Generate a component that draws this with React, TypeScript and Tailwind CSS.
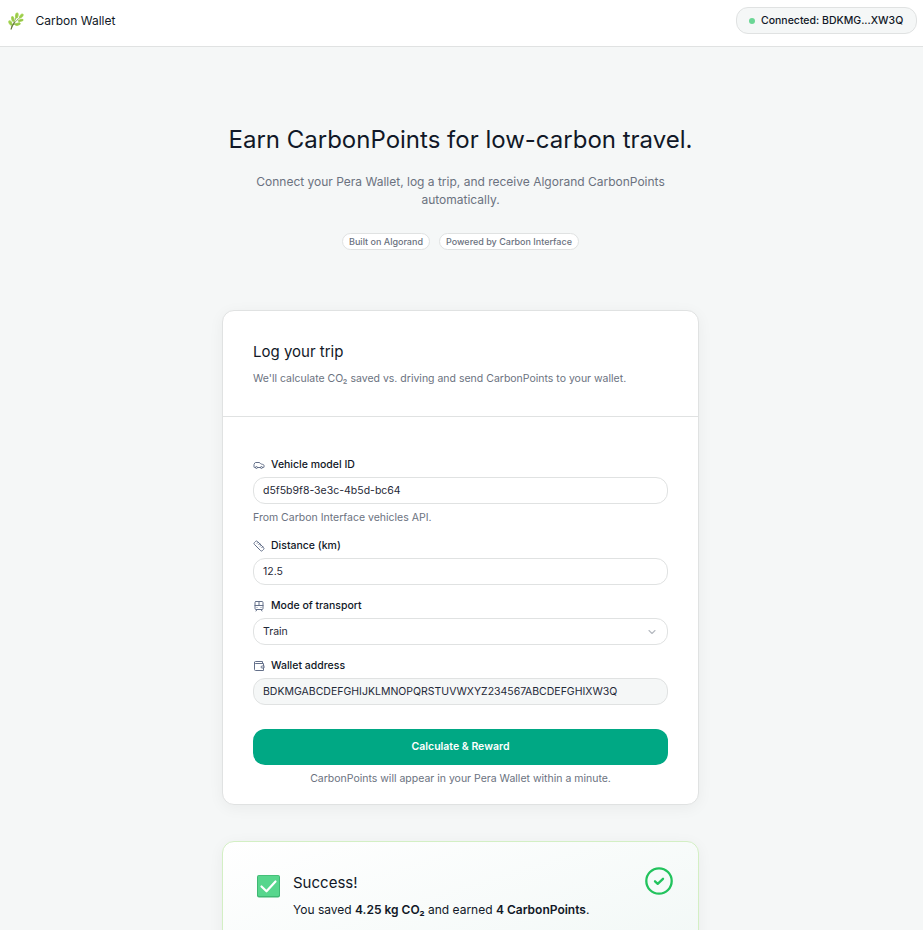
import type { ReactNode } from 'react';
import { Car, Ruler, TramFront } from 'lucide-react';

function LeafLogo() {
  return (
    <svg className="h-[18px] w-4" viewBox="0 0 16 18" fill="none">
      <path d="M3.200 17C4.200 13 7 9.500 12.200 5.400M4 12.600 3 9.800M6 10.200 8.600 4.500M5.300 12.600 11.500 11" stroke="#7f9f4a" strokeWidth="0.9" strokeLinecap="round" />
      <g fill="#a9d857">
        <ellipse cx="8.800" cy="3.400" rx="1.800" ry="3" transform="rotate(8 8.800 3.400)" />
        <ellipse cx="13.300" cy="4" rx="1.600" ry="2.800" transform="rotate(42 13.300 4)" />
        <ellipse cx="4.800" cy="6.900" rx="1.700" ry="3" transform="rotate(-14 4.800 6.900)" />
        <ellipse cx="12.800" cy="8.400" rx="1.500" ry="2.800" transform="rotate(78 12.800 8.400)" />
        <ellipse cx="2.400" cy="11" rx="1.700" ry="2.800" transform="rotate(-30 2.400 11)" />
        <ellipse cx="9.700" cy="12.200" rx="1.600" ry="3" transform="rotate(78 9.700 12.200)" />
      </g>
      <g stroke="#86b544" strokeWidth="0.7" strokeLinecap="round">
        <path d="M8.500 5.500 9 2M12.300 5.300 14.500 3M5.300 9 4.600 5.500M3.600 12.800 1.800 10M7.500 12.600 12 11.800M10.500 9 14.500 8" />
      </g>
      <path d="M3.200 17C3.500 14.800 4.700 12.700 6.400 10.700" stroke="#66783f" strokeWidth="1.100" strokeLinecap="round" />
    </svg>
  );
}

const iconClass = 'size-3 shrink-0 text-[#64708a]';

function WalletIcon() {
  return (
    <svg className={iconClass} viewBox="0 0 24 24" fill="none" stroke="currentColor" strokeWidth="2" strokeLinecap="round" strokeLinejoin="round">
      <path d="M21 12V7H5a2 2 0 0 1 0-4h14v4" />
      <path d="M3 5v14a2 2 0 0 0 2 2h16v-5" />
      <path d="M18 12a2 2 0 0 0 0 4h4v-4Z" />
    </svg>
  );
}

function Label({ icon, children }: { icon: ReactNode; children: ReactNode }) {
  return (
    <div className="flex h-4 items-center gap-1.5 text-[10.5px] font-medium leading-4 text-[#111827]">
      {icon}
      {children}
    </div>
  );
}

function Field({ className = 'bg-white', children }: { className?: string; children: ReactNode }) {
  return (
    <div className={`mt-1 flex h-[27px] items-center justify-between rounded-[12px] border border-[#e0e2e2] px-[9px] text-[10.5px] text-[#1f2937] ${className}`}>
      {children}
    </div>
  );
}

export default function App() {
  return (
    <div className="flex h-[930px] w-full flex-col overflow-hidden bg-[#f5f7f7] font-['Inter',sans-serif] text-[#111827]">
      <header className="flex h-[47px] shrink-0 items-start justify-between border-b border-[#e0e2e2] bg-white pl-2 pr-1.5 pt-[7px]">
        <div className="flex h-[27px] items-center gap-[11.500px] text-[12px]">
          <LeafLogo />
          <span>Carbon Wallet</span>
        </div>
        <div className="flex h-[27px] w-[181px] items-center gap-1.5 whitespace-nowrap rounded-[12px] border border-[#e0e2e2] bg-[#f5f7f7] pl-3 text-[10.5px] font-medium">
          <span className="size-1.5 rounded-full bg-[#6bd695]" />
          Connected: BDKMG...XW3Q
        </div>
      </header>

      <main className="ml-[222px] flex w-[477px] shrink-0 flex-col">
        <section className="flex flex-col items-center pt-[78px] text-center">
          <h1 className="whitespace-nowrap text-[24px] leading-[30px]">Earn CarbonPoints for low-carbon travel.</h1>
          <p className="mt-[18px] w-[432px] text-[12px] leading-[18px] text-[#6b7280]">
            Connect your Pera Wallet, log a trip, and receive Algorand CarbonPoints automatically.
          </p>
          <div className="mt-6 flex gap-[9px] text-[9px] font-medium leading-[15px] text-[#6b7280]">
            <span className="w-[88px] rounded-full border border-[#e0e2e2] bg-white">Built on Algorand</span>
            <span className="w-[140px] rounded-full border border-[#e0e2e2] bg-white">Powered by Carbon Interface</span>
          </div>
        </section>

        <section className="mt-[60px] h-[495px] rounded-[12px] border border-[#e0e2e2] bg-white shadow-[0_3px_15px_rgba(0,0,0,0.05)]">
          <div className="h-[106px] border-b border-[#e0e2e2] px-[30px] pt-[31px]">
            <h2 className="text-[15px] leading-5">Log your trip</h2>
            <p className="mt-[9px] text-[10.5px] leading-4 text-[#6b7280]">
              We'll calculate CO₂ saved vs. driving and send CarbonPoints to your wallet.
            </p>
          </div>
          <div className="px-[30px] pt-10">
            <Label icon={<Car className={iconClass} />}>Vehicle model ID</Label>
            <Field>d5f5b9f8-3e3c-4b5d-bc64</Field>
            <p className="mb-3 mt-1.5 text-[10.5px] leading-4 text-[#6b7280]">From Carbon Interface vehicles API.</p>
            <Label icon={<Ruler className={iconClass} />}>Distance (km)</Label>
            <Field>12.5</Field>
            <div className="h-[13px]" />
            <Label icon={<TramFront className={iconClass} />}>Mode of transport</Label>
            <Field>
              Train
              <svg className="size-3" viewBox="0 0 12 12" fill="none" stroke="#b5b9c0" strokeWidth="1.1" strokeLinecap="round" strokeLinejoin="round">
                <path d="m3 4.500 3 3 3-3" />
              </svg>
            </Field>
            <div className="h-[13px]" />
            <Label icon={<WalletIcon />}>Wallet address</Label>
            <Field className="bg-[#f5f7f7]">BDKMGABCDEFGHIJKLMNOPQRSTUVWXYZ234567ABCDEFGHIXW3Q</Field>
            <button className="mt-6 block h-9 w-full rounded-[12px] bg-[#00a884] text-[10.5px] font-semibold text-white">Calculate &amp; Reward</button>
            <p className="mt-1.5 text-center text-[10.5px] leading-4 text-[#6b7280]">
              CarbonPoints will appear in your Pera Wallet within a minute.
            </p>
          </div>
        </section>

        <section className="mt-9 flex h-[150px] items-start rounded-[12px] border border-[#d3efc4] bg-linear-to-br from-white to-[#f0f7f5] pl-[34px] pr-[25px] shadow-[0_3px_15px_rgba(0,0,0,0.05)]">
          <svg className="mt-[33px] h-[23px] w-[23px]" viewBox="0 0 23 23">
            <rect width="23" height="22.500" rx="2" fill="#3fb873" />
            <rect x="1" y="0.700" width="21" height="20.300" rx="1" fill="#57d68d" />
            <path d="m4.500 11.500 5 4.800 9-9.800" fill="none" stroke="#fff" strokeWidth="2.200" strokeLinecap="round" strokeLinejoin="round" />
          </svg>
          <div className="ml-[13px] flex-1 pt-[31px]">
            <h2 className="text-[15px] leading-5">Success!</h2>
            <p className="mt-2 text-[12px] leading-[18px]">
              You saved <b className="font-semibold">4.25 kg CO₂</b> and earned <b className="font-semibold">4 CarbonPoints</b>.
            </p>
          </div>
          <svg className="mt-[25px] size-7" viewBox="0 0 28 28" fill="none" stroke="#22c35d" strokeWidth="2.300" strokeLinecap="round" strokeLinejoin="round">
            <circle cx="14" cy="14" r="12.700" />
            <path d="m10 14.300 2.700 2.500 5.300-5" />
          </svg>
        </section>
      </main>
    </div>
  );
}
